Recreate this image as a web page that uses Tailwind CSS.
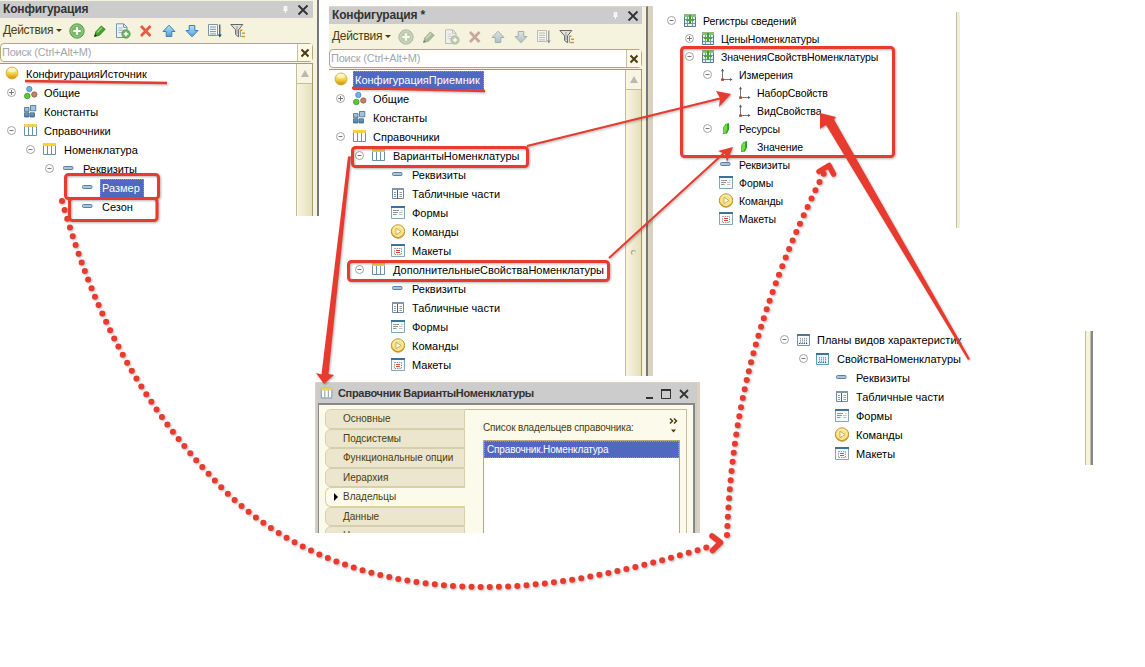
<!DOCTYPE html>
<html lang="ru">
<head>
    <meta charset="UTF-8">
    <meta name="viewport" content="width=device-width, initial-scale=1.0">
    <title>Конфигурация</title>
    <script src="https://cdn.jsdelivr.net/npm/@tailwindcss/browser@4"></script>
</head>
<body class="relative h-[667px] w-[1145px] overflow-hidden bg-white font-['Liberation_Sans',sans-serif] text-[11px] leading-[19px] text-black">
    <!-- Icon sprite -->
    <svg class="absolute size-0">
        <defs>
            <linearGradient id="gold" x1="0" y1="0" x2="0" y2="1"><stop offset="0" stop-color="#fff3a8"/><stop offset=".55" stop-color="#f5cf3f"/><stop offset="1" stop-color="#c98f12"/></linearGradient>
            <linearGradient id="blue" x1="0" y1="0" x2="0" y2="1"><stop offset="0" stop-color="#b9e0f5"/><stop offset="1" stop-color="#4f9fd8"/></linearGradient>
            <linearGradient id="steel" x1="0" y1="0" x2="0" y2="1"><stop offset="0" stop-color="#b5cbdc"/><stop offset="1" stop-color="#4b7a9f"/></linearGradient>
        </defs>
        <symbol id="minus" viewBox="0 0 16 16"><circle cx="7.5" cy="7.5" r="4" fill="#fff" stroke="#a3a3a3"/><path d="M5.500 7.500h4" stroke="#777"/></symbol>
        <symbol id="plus" viewBox="0 0 16 16"><circle cx="7.5" cy="7.5" r="4" fill="#fff" stroke="#a3a3a3"/><path d="M5 7.500h5M7.500 5v5" stroke="#777"/></symbol>
        <symbol id="root" viewBox="0 0 16 16"><circle cx="8" cy="7" r="6" fill="url(#gold)" stroke="#d2a531" stroke-width=".8"/><ellipse cx="8" cy="4.300" rx="3.8" ry="2.2" fill="#fff" opacity=".6"/></symbol>
        <symbol id="common" viewBox="0 0 16 16"><circle cx="6.3" cy="4" r="2.7" fill="#6fb2e0" stroke="#3f83b8" stroke-width=".7"/><circle cx="4.3" cy="11" r="2.8" fill="#5bcb33" stroke="#2f8f1a" stroke-width=".7"/><circle cx="11.3" cy="9.500" r="2.7" fill="#bd8468" stroke="#8a5339" stroke-width=".7"/></symbol>
        <symbol id="const" viewBox="0 0 16 16"><g fill="url(#steel)" stroke="#3f6a8d" stroke-width=".8"><path d="M1.500 3.500h4.500v4.300H1.500zM1.500 8.800h4.500v4.200H1.500zM7 8.800h4.500v4.200H7z"/><path d="M7.500 1.500h5.300v5.300H7.500z" fill="#a5c3dc"/></g></symbol>
        <symbol id="table" viewBox="0 0 16 16"><path d="M1.500 1.500h12v11h-12z" fill="#fff" stroke="#6e8ea2"/><path d="M1 1h13v3H1z" fill="#d3c694"/><path d="M2 1h3v2.500H2zM6 1h3v2.500H6zM10 1h3v2.500h-3z" fill="#ffd91f"/><path d="M5.500 4v8M9.500 4v8" stroke="#6e8ea2"/></symbol>
        <symbol id="dash" viewBox="0 0 16 16"><rect x="2.500" y="5.500" width="9.500" height="3" rx="1" fill="#a6c6dd" stroke="#5d819f"/></symbol>
        <symbol id="tabular" viewBox="0 0 16 16"><path d="M2.500 2.500h11v10h-11z" fill="#fff" stroke="#7288a3"/><path d="M2 2h12v2H2z" fill="#7f96b0"/><path d="M7.500 4v9" stroke="#44658a"/><path d="M4 6.500h2M9.500 6.500H12M4 8.500h2M9.500 8.500H12M4 10.500h2M9.500 10.500H12" stroke="#8a99ab"/></symbol>
        <symbol id="form" viewBox="0 0 16 16"><path d="M1.500 1.500h13v12h-13z" fill="#f7f9fa" stroke="#89a5b8"/><path d="M1 1h14v2H1z" fill="#3f719b"/><path d="M3 5.500h6M3 7.500h5M3 9.500h3.500" stroke="#929292"/><path d="M9 7.500h3.500M9 9.500h3.500M11 5.500h1.500" stroke="#c3c3c3"/></symbol>
        <symbol id="cmd" viewBox="0 0 16 16"><circle cx="8" cy="7.500" r="6.700" fill="url(#gold)" stroke="#b9963b"/><circle cx="8" cy="7.500" r="5" fill="#f6e08a" stroke="#fff4bd" stroke-width=".8"/><path d="M6 4.300v6.400l5-3.200z" fill="#fffdf0" stroke="#c3a04a" stroke-width=".8"/></symbol>
        <symbol id="layout" viewBox="0 0 16 16"><path d="M1.500 1.500h13v12h-13z" fill="#f7fafb" stroke="#89a5b8"/><path d="M1 1h14v2H1z" fill="#3f719b"/><path d="M4.500 5.500h7v6h-7z" fill="none" stroke="#8c8c8c" stroke-dasharray="1.300 1"/><path d="M6 7.500h4M6 9.500h4" stroke="#e04436"/></symbol>
        <symbol id="register" viewBox="0 0 16 16"><path d="M2.500 1.500h11v12h-11z" fill="#e6f0f4" stroke="#587b8f"/><path d="M2 1h12v3H2z" fill="#8cbd77"/><path d="M5.500 4v9M10.500 4v9M3 6.500h10M3 10.500h10" stroke="#7796a7"/><path d="M7 2h2v9H7z" fill="#3d9e31"/><path d="M4 6h8v2H4z" fill="#4da63c"/></symbol>
        <symbol id="axes" viewBox="0 0 16 16"><path d="M4.500 3v9.500H13" fill="none" stroke="#777"/><path d="M4.500 1.500L6 4.200H3zM14.500 12.500L12 11v3z" fill="#555"/><path d="M3 11.500h3v2.300H3z" fill="#d83b2d"/></symbol>
        <symbol id="resource" viewBox="0 0 16 16"><path d="M5 6.500L7.500 3l3.500-1v6.500L9 12.500l-4 .5z" fill="#2a9f18"/><path d="M5.300 6.600L7.700 3.400l1.500-.4v6l-1.700 3-2.200.6z" fill="#6fdc44"/></symbol>
        <symbol id="plan" viewBox="0 0 16 16"><path d="M1.500 2.500h12v11h-12z" fill="#f5f8fa" stroke="#7d93a5"/><path d="M1 2h13v2H1z" fill="#597489"/><path d="M4.500 6v5M6.500 6v5M8.500 6v5M10.500 6v5" stroke="#93a2ad" stroke-dasharray="1.500 .5"/><path d="M3 11.500h9" stroke="#3c4c58" stroke-dasharray="1.300 1"/></symbol>
        <symbol id="planblue" viewBox="0 0 16 16"><path d="M1.500 2.500h12v11h-12z" fill="#e7f6fc" stroke="#5c9cba"/><path d="M1 2h13v2H1z" fill="#3b7596"/><path d="M4.500 6v5M6.500 6v5M8.500 6v5M10.500 6v5" stroke="#5daeca" stroke-dasharray="1.500 .5"/><path d="M3 11.500h9" stroke="#2a6585" stroke-dasharray="1.300 1"/></symbol>
        <symbol id="add" viewBox="0 0 16 16"><circle cx="8" cy="8" r="7.200" fill="#6fb35c" stroke="#659958"/><circle cx="8" cy="8" r="5.900" fill="#76b965" stroke="#a7d19b" stroke-width=".7"/><path d="M8 4.300v7.400M4.300 8h7.400" stroke="#fff" stroke-width="2.200"/></symbol>
        <symbol id="pencil" viewBox="0 0 16 16"><path d="M2.500 13.500l1.300-4.700L9.300 3l3.900 3.300-5.800 6z" fill="#43a52c" stroke="#257518" stroke-width=".8"/><path d="M5 9.500l5-5" stroke="#92d878" stroke-width="1.300"/><path d="M2.300 13.800l.8-2.700 1.800 1.700z" fill="#222"/></symbol>
        <symbol id="copy" viewBox="0 0 16 16"><path d="M1.500.8h7.300L12 4v10.500H1.500z" fill="#eaf2f7" stroke="#7896aa"/><path d="M8.500 1v3.300H12" fill="none" stroke="#7896aa"/><path d="M3.500 5h4M3.500 7.300h6M3.500 9.600h4" stroke="#8ea7b7" stroke-width=".8"/><circle cx="11" cy="11" r="4.200" fill="#6fb35c" stroke="#5b914f" stroke-width=".7"/><path d="M11 8.700v4.600M8.700 11h4.600" stroke="#fff" stroke-width="1.500"/></symbol>
        <symbol id="remove" viewBox="0 0 16 16"><path d="M3 3l9.500 10M12.500 3L3 13" stroke="#ec5a42" stroke-width="2.700"/></symbol>
        <symbol id="up" viewBox="0 0 16 16"><path d="M8 2.200L14 8.500h-3.200v5H5.200v-5H2z" fill="url(#blue)" stroke="#3b7fb5"/></symbol>
        <symbol id="down" viewBox="0 0 16 16"><path d="M8 13.800L14 7.500h-3.200v-5H5.200v5H2z" fill="url(#blue)" stroke="#3b7fb5"/></symbol>
        <symbol id="list" viewBox="0 0 16 16"><path d="M1.500 1.500h9v11h-9z" fill="#f7fafb" stroke="#7993a7"/><path d="M3 4h6M3 6.300h6M3 8.600h6M3 10.900h6" stroke="#7c91a1"/><path d="M12.800 1.500v11" stroke="#254d6b" stroke-width="1.200"/><path d="M10.800 11.500h4l-2 3z" fill="#254d6b"/></symbol>
        <symbol id="filter" viewBox="0 0 16 16"><path d="M.8 1.500h12L8.600 6.800v7l-3-2.300V6.800z" fill="#e1e1df" stroke="#666"/><path d="M7 3v8" stroke="#999"/><path d="M10 7.300h2.500M12 10.300h3M12 13.500h3" stroke="#d39a28" stroke-width="1.600"/><path d="M10.500 8v5.500H12" fill="none" stroke="#567fa0" stroke-width=".7"/></symbol>
        <symbol id="pin" viewBox="0 0 8 10"><path d="M2.500 1.500h3v4h-3z" fill="#eee" stroke="#fff"/><path d="M1.500 6h5M4 6v3" stroke="#fff"/></symbol>
        <symbol id="close" viewBox="0 0 12 12"><path d="M1.500 1.500l9 9M10.500 1.500l-9 9" stroke="#333" stroke-width="1.900"/></symbol>
        <symbol id="clear" viewBox="0 0 12 12"><path d="M2.500 2.500l7 7M9.500 2.500l-7 7" stroke="#4b3d0d" stroke-width="2"/></symbol>
    </svg>

    <!-- Source configuration -->
    <section class="absolute top-0 left-0 flex h-[216px] w-[319px] flex-col border-r-2 border-[#777] bg-[#f5f2dd] pr-[4px] pt-px">
        <header class="flex h-[17px] shrink-0 items-center bg-[#cccccc] pr-1 pl-[3px] text-[12px] font-bold tracking-[-0.15px] text-[#333]">
            <span class="flex-1">Конфигурация</span>
            <svg class="mr-2 h-[9px] w-[7px]"><use href="#pin"/></svg>
            <svg class="size-[12px]"><use href="#close"/></svg>
        </header>
        <div class="flex h-[25px] shrink-0 items-center pl-[3px] text-[12px] tracking-[-0.3px] text-[#4b3d0d]">
            <span class="w-[53px] whitespace-nowrap">Действия</span>
            <span class="mr-[7px] border-x-[3px] border-t-[3px] border-x-transparent border-t-[#4b3d0d]"></span>
            <div class="flex gap-[7px]">
                <svg class="size-4"><use href="#add"/></svg>
                <svg class="size-4"><use href="#pencil"/></svg>
                <svg class="size-4"><use href="#copy"/></svg>
                <svg class="size-4"><use href="#remove"/></svg>
                <svg class="size-4"><use href="#up"/></svg>
                <svg class="size-4"><use href="#down"/></svg>
                <svg class="size-4"><use href="#list"/></svg>
                <svg class="size-4"><use href="#filter"/></svg>
            </div>
        </div>
        <div class="flex h-[19px] shrink-0 items-center rounded-sm border border-[#b3a97b] bg-white">
            <span class="flex-1 pl-px tracking-[-0.2px] text-[#a5a5b0]">Поиск (Ctrl+Alt+M)</span>
            <span class="flex h-full w-[15px] items-center justify-center border-l border-[#c9c09b] bg-[#fbf8e6]"><svg class="size-[12px]"><use href="#clear"/></svg></span>
        </div>
        <div class="mt-px flex min-h-0 flex-1 border-t border-r border-[#a39a6e] bg-white">
            <div id="tree-source" class="min-w-0 flex-1 pt-px pl-[2px]"></div>
            <div class="w-4 border-l border-[#c5bd98] bg-linear-to-r from-[#f8f4e0] to-[#e6dfbd]">
                <div class="flex h-5 items-center justify-center border-b border-[#c5bd98] bg-[#f8f5e5]"><span class="border-x-[4px] border-b-[7px] border-x-transparent border-b-[#bbb8ad]"></span></div>
            </div>
        </div>
    </section>

    <!-- Target configuration -->
    <section class="absolute top-[6px] left-[329px] flex h-[370px] w-[324px] border-r-[5px] border-[#d8d2bf]">
        <div class="flex min-w-0 flex-1 flex-col border-t border-r-2 border-t-[#ddd8c4] border-r-[#777] bg-[#f5f2dd] pr-[4px]">
            <header class="flex h-[17px] shrink-0 items-center bg-[#cccccc] pr-[3px] pl-[3px] text-[12px] font-bold tracking-[-0.15px] text-[#333]">
                <span class="flex-1">Конфигурация *</span>
                <svg class="mr-2 h-[9px] w-[7px]"><use href="#pin"/></svg>
                <svg class="size-[12px]"><use href="#close"/></svg>
            </header>
            <div class="flex h-[25px] shrink-0 items-center pl-[3px] text-[12px] tracking-[-0.3px] text-[#4b3d0d]">
                <span class="w-[53px] whitespace-nowrap">Действия</span>
                <span class="mr-[7px] border-x-[3px] border-t-[3px] border-x-transparent border-t-[#4b3d0d]"></span>
                <div class="flex gap-[7px]">
                    <svg class="size-4 opacity-55 grayscale-60"><use href="#add"/></svg>
                    <svg class="size-4 opacity-55 grayscale-60"><use href="#pencil"/></svg>
                    <svg class="size-4 opacity-55 grayscale-60"><use href="#copy"/></svg>
                    <svg class="size-4 opacity-55 grayscale-60"><use href="#remove"/></svg>
                    <svg class="size-4 opacity-55 grayscale-60"><use href="#up"/></svg>
                    <svg class="size-4 opacity-55 grayscale-60"><use href="#down"/></svg>
                    <svg class="size-4 opacity-55 grayscale-60"><use href="#list"/></svg>
                    <svg class="size-4"><use href="#filter"/></svg>
                </div>
            </div>
            <div class="flex h-[19px] shrink-0 items-center rounded-sm border border-[#b3a97b] bg-white">
                <span class="flex-1 pl-px tracking-[-0.2px] text-[#a5a5b0]">Поиск (Ctrl+Alt+M)</span>
                <span class="flex h-full w-[15px] items-center justify-center border-l border-[#c9c09b] bg-[#fbf8e6]"><svg class="size-[12px]"><use href="#clear"/></svg></span>
            </div>
            <div class="mt-px flex min-h-0 flex-1 border-t border-r border-[#a39a6e] bg-white">
                <div id="tree-target" class="min-w-0 flex-1 pt-px pl-[2px]"></div>
                <div class="w-4 border-l border-[#c5bd98] bg-linear-to-r from-[#f8f4e0] to-[#e6dfbd]">
                    <div class="flex h-5 items-center justify-center border-b border-[#c5bd98] bg-[#f8f5e5]"><span class="border-x-[4px] border-b-[7px] border-x-transparent border-b-[#bbb8ad]"></span></div>
                    <div class="mt-[160px] ml-[5px] size-[5px] rounded-full border-t border-l border-[#aaa37f]"></div>
                </div>
            </div>
        </div>
    </section>

    <!-- Information registers -->
    <section class="absolute top-[12px] left-[663px] h-[216px] w-[297px] border-r-[3px] border-[#f1eed8]">
        <div id="tree-registers" class="h-full border-r border-[#c5bd98] text-[10.500px] leading-[18px] tracking-[-0.06px]"></div>
    </section>

    <!-- Characteristic types -->
    <section class="absolute top-[331px] left-[775px] flex h-[134px] w-[318px] border-r-2 border-[#888]">
        <div id="tree-plans" class="flex-1"></div>
        <div class="w-[6px] border-x border-[#c5bd98] bg-[#f5f2dd]"></div>
    </section>

    <!-- Catalog properties window -->
    <section class="absolute top-[382px] left-[315px] h-[151px] w-[385px] border-t border-r-[3px] border-l border-[#d8d2bf]">
        <div class="flex h-full flex-col bg-[#cccccc] px-[2px] pt-px">
            <header class="flex h-[19px] shrink-0 items-center pr-[4px] pl-[2px] text-[11px] font-bold tracking-[-0.32px] text-[#333]">
                <svg class="mr-[4px] size-[14px]"><use href="#table"/></svg>
                <span class="flex-1">Справочник ВариантыНоменклатуры</span>
                <svg class="h-[12px] w-[48px]" viewBox="0 0 48 12"><path d="M3 10h7" stroke="#333" stroke-width="2"/><path d="M18.500 1.500h9v9h-9z" fill="none" stroke="#333"/><path d="M18 2h10" stroke="#333" stroke-width="2"/><path d="M37 2l8 8M45 2l-8 8" stroke="#333" stroke-width="1.800"/></svg>
            </header>
            <div class="flex min-h-0 flex-1 border-t-2 border-r-2 border-l border-[#888] bg-[#fcfaea] pt-[4px] pr-[6px] pl-[6px] text-[10px] text-[#4b3d0d]">
                <div class="h-full w-[140px] shrink-0 overflow-hidden leading-[17.500px]">
                    <div class="h-[19.500px] rounded-l-md border border-[#d6cfae] bg-[#ebe6cd] pl-[17px]">Основные</div>
                    <div class="h-[19.500px] rounded-l-md border border-[#d6cfae] bg-[#ebe6cd] pl-[17px]">Подсистемы</div>
                    <div class="h-[19.500px] rounded-l-md border border-[#d6cfae] bg-[#ebe6cd] pl-[17px]">Функциональные опции</div>
                    <div class="h-[19.500px] rounded-l-md border border-[#d6cfae] bg-[#ebe6cd] pl-[17px]">Иерархия</div>
                    <div class="flex h-[19.500px] items-center rounded-l-md border border-r-0 border-[#e3cf95] bg-[#fcfaea] pl-[8px]"><span class="mr-[5px] border-y-[4px] border-l-[4px] border-y-transparent border-l-black"></span>Владельцы</div>
                    <div class="h-[19.500px] rounded-l-md border border-[#d6cfae] bg-[#ebe6cd] pl-[17px]">Данные</div>
                    <div class="h-[19.500px] rounded-l-md border border-[#d6cfae] bg-[#ebe6cd] pl-[17px]">Нумерация</div>
                </div>
                <div class="flex flex-1 flex-col border-t border-r border-[#c5bd98] pt-[8px] pr-[6px] pl-[18px]">
                    <div class="flex h-[22px] shrink-0 justify-between">
                        <span class="tracking-[-0.15px]">Список владельцев справочника:</span>
                        <svg class="h-[20px] w-[12px]" viewBox="0 0 12 20"><path d="M2 .5l2.500 2.500L2 5.500M6 .5l2.500 2.500L6 5.500" fill="none" stroke="#4b3d0d" stroke-width="1.500"/><path d="M3 11.500h5l-2.500 3z" fill="#4b3d0d"/></svg>
                    </div>
                    <div class="flex-1 border-x border-t border-[#b3a97b] bg-white">
                        <div class="h-[17px] border border-dotted border-[#b39b45] bg-[#5068c0] pl-[2px] leading-[15px] tracking-[-0.15px] text-white">Справочник.Номенклатура</div>
                    </div>
                </div>
            </div>
        </div>
    </section>

    <!-- Links between objects -->
    <svg class="absolute inset-0 h-[667px] w-[1145px] drop-shadow-[1px_1px_1px_rgba(0,0,0,0.3)]" viewBox="0 0 1145 667" fill="none" stroke="#e63b2e" stroke-linejoin="round">
        <g stroke-width="3">
            <rect x="65.500" y="174.500" width="93" height="24" rx="3"/>
            <rect x="69.500" y="198.500" width="87.500" height="22" rx="3"/>
            <rect x="352.500" y="147.500" width="175" height="19" rx="3"/>
            <rect x="348.500" y="261.500" width="260" height="19" rx="3"/>
            <rect x="681.500" y="47.500" width="212" height="109" rx="3"/>
            <path d="M25 81L167 83M352 88l133 3" stroke-width="2.500"/>
        </g>
        <path d="M527 146L722 98M609 258L724 153" stroke-width="2"/>
        <g fill="#e63b2e" stroke="none">
            <path d="M731 94l-15-3 4 7-1 9z"/>
            <path d="M733 147l-15 4 7 3 2 8z"/>
            <path d="M348 156.500h3L328.500 374l5.500 1-10 9-8-11 5.500 1.500z"/>
            <path d="M968 360l2-1L834 119.500l2-2.500-16-4 0 16 6-4z"/>
        </g>
        <g stroke-width="6" stroke-linecap="round" stroke-dasharray="0 9.200">
            <path d="M62 201C93 310 137 402 224 490C300 565 400 587 485 587C560 587 640 568 708 547"/>
            <path d="M727 535C731 440 745 330 824 173"/>
        </g>
        <path d="M712 536l8.500 6.500-8 8M819 171.500l10-6 4.500 8.500" stroke-width="5.500" stroke-linecap="round"/>
    </svg>

    <script>
        // [level, toggle, icon, label, selected]
        const details = (level) => [
            [level, '', 'dash', 'Реквизиты'],
            [level, '', 'tabular', 'Табличные части'],
            [level, '', 'form', 'Формы'],
            [level, '', 'cmd', 'Команды'],
            [level, '', 'layout', 'Макеты']
        ];

        const trees = {
            'tree-source': { step: 19, rows: [
                [-1, '', 'root', 'КонфигурацияИсточник'],
                [0, 'plus', 'common', 'Общие'],
                [0, '', 'const', 'Константы'],
                [0, 'minus', 'table', 'Справочники'],
                [1, 'minus', 'table', 'Номенклатура'],
                [2, 'minus', 'dash', 'Реквизиты'],
                [3, '', 'dash', 'Размер', true],
                [3, '', 'dash', 'Сезон']
            ] },
            'tree-target': { step: 19, rows: [
                [-1, '', 'root', 'КонфигурацияПриемник', true],
                [0, 'plus', 'common', 'Общие'],
                [0, '', 'const', 'Константы'],
                [0, 'minus', 'table', 'Справочники'],
                [1, 'minus', 'table', 'ВариантыНоменклатуры'],
                ...details(2),
                [1, 'minus', 'table', 'ДополнительныеСвойстваНоменклатуры'],
                ...details(2)
            ] },
            'tree-registers': { step: 18, rows: [
                [0, 'minus', 'register', 'Регистры сведений'],
                [1, 'plus', 'register', 'ЦеныНоменклатуры'],
                [1, 'minus', 'register', 'ЗначенияСвойствНоменклатуры'],
                [2, 'minus', 'axes', 'Измерения'],
                [3, '', 'axes', 'НаборСвойств'],
                [3, '', 'axes', 'ВидСвойства'],
                [2, 'minus', 'resource', 'Ресурсы'],
                [3, '', 'resource', 'Значение'],
                [2, '', 'dash', 'Реквизиты'],
                [2, '', 'form', 'Формы'],
                [2, '', 'cmd', 'Команды'],
                [2, '', 'layout', 'Макеты']
            ] },
            'tree-plans': { step: 19, rows: [
                [0, 'minus', 'plan', 'Планы видов характеристик'],
                [1, 'minus', 'planblue', 'СвойстваНоменклатуры'],
                ...details(2)
            ] }
        };

        Object.entries(trees).forEach(([id, tree]) => {
            const slot = `width: ${tree.step}px; padding-left: ${tree.step - 17}px`;

            document.getElementById(id).innerHTML = tree.rows.map(([level, toggle, icon, label, selected]) => `
                <div class="flex whitespace-nowrap" style="height: ${tree.step}px; padding-left: ${Math.max(level, 0) * tree.step}px">
                    ${level < 0 ? '' : `<span class="shrink-0 pt-px" style="${slot}"><svg class="size-4"><use href="#${toggle}"/></svg></span>`}
                    <span class="shrink-0 pt-px" style="${slot}"><svg class="size-4"><use href="#${icon}"/></svg></span>
                    <span class="${selected ? 'ml-[3px] border border-dotted border-[#b39b45] bg-[#5068c0] pr-[3px] pl-px leading-[17px] text-white' : level === 0 || tree.step === 18 ? 'ml-[4px]' : 'ml-[5px]'}">${label}</span>
                </div>
            `).join('');
        });
    </script>
</body>
</html>
